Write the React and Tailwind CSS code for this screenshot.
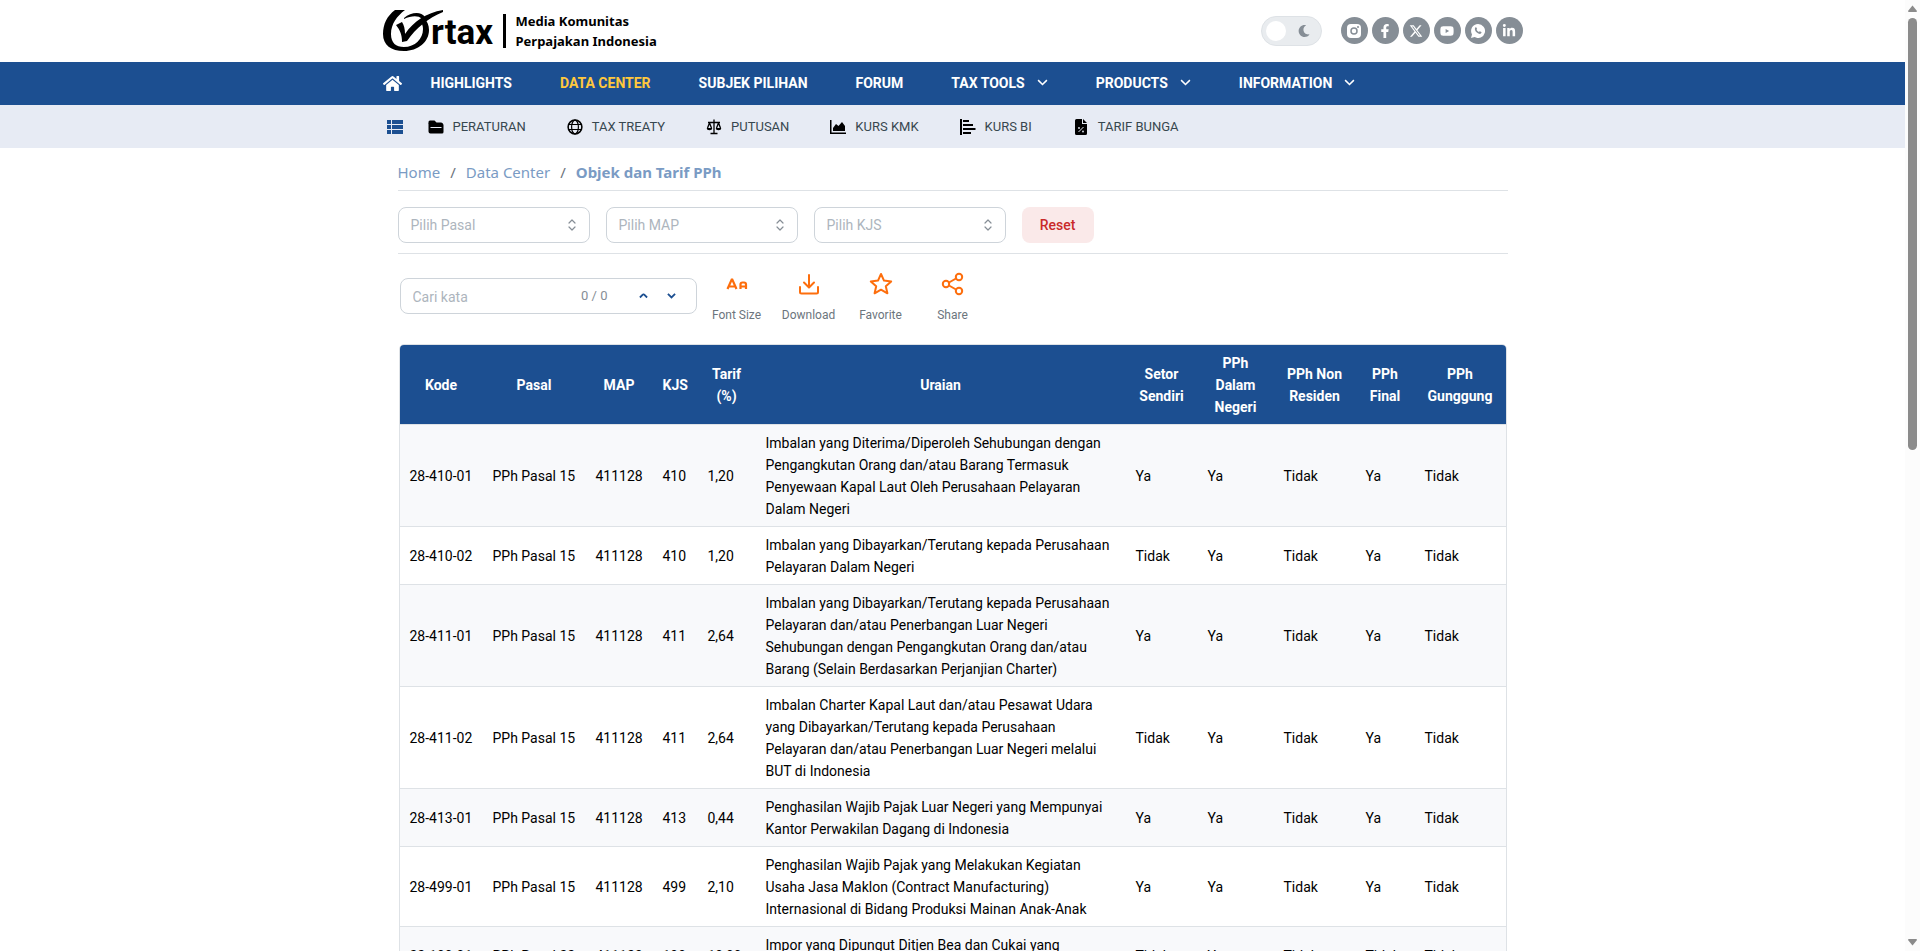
import { useState } from "react";
import clsx from "clsx";
import { FaHome, FaFacebookF, FaLinkedinIn, FaYoutube, FaMoon } from "react-icons/fa";
import { FaXTwitter } from "react-icons/fa6";

const MENU = [
  { label: "HIGHLIGHTS" },
  { label: "DATA CENTER", active: true },
  { label: "SUBJEK PILIHAN" },
  { label: "FORUM" },
  { label: "TAX TOOLS", dropdown: true },
  { label: "PRODUCTS", dropdown: true },
  { label: "INFORMATION", dropdown: true },
];

const SUBMENU = [
  { label: "PERATURAN", icon: FolderIcon },
  { label: "TAX TREATY", icon: GlobeIcon },
  { label: "PUTUSAN", icon: ScaleIcon },
  { label: "KURS KMK", icon: AreaIcon },
  { label: "KURS BI", icon: BarsIcon },
  { label: "TARIF BUNGA", icon: FilePercentIcon },
];

const SOCIALS = [
  { name: "Instagram", icon: InstagramIcon },
  { name: "Facebook", icon: FaFacebookF },
  { name: "X", icon: FaXTwitter },
  { name: "YouTube", icon: FaYoutube },
  { name: "WhatsApp", icon: WhatsappIcon },
  { name: "LinkedIn", icon: FaLinkedinIn },
];

const COLUMNS = [
  { label: "Kode", width: "w-[83px]" },
  { label: "Pasal", width: "w-[103px]" },
  { label: "MAP", width: "w-[67px]" },
  { label: "KJS", width: "w-[45px]" },
  { label: "Tarif (%)", width: "w-[58px]" },
  { label: "Uraian", width: "" },
  { label: "Setor Sendiri", width: "w-[72px]" },
  { label: "PPh Dalam Negeri", width: "w-[76px]" },
  { label: "PPh Non Residen", width: "w-[82px]" },
  { label: "PPh Final", width: "w-[59px]" },
  { label: "PPh Gunggung", width: "w-[91px]" },
];

const ROWS = [
  ["28-410-01", "PPh Pasal 15", "411128", "410", "1,20", "Imbalan yang Diterima/Diperoleh Sehubungan dengan Pengangkutan Orang dan/atau Barang Termasuk Penyewaan Kapal Laut Oleh Perusahaan Pelayaran Dalam Negeri", "Ya", "Ya", "Tidak", "Ya", "Tidak"],
  ["28-410-02", "PPh Pasal 15", "411128", "410", "1,20", "Imbalan yang Dibayarkan/Terutang kepada Perusahaan Pelayaran Dalam Negeri", "Tidak", "Ya", "Tidak", "Ya", "Tidak"],
  ["28-411-01", "PPh Pasal 15", "411128", "411", "2,64", "Imbalan yang Dibayarkan/Terutang kepada Perusahaan Pelayaran dan/atau Penerbangan Luar Negeri Sehubungan dengan Pengangkutan Orang dan/atau Barang (Selain Berdasarkan Perjanjian Charter)", "Ya", "Ya", "Tidak", "Ya", "Tidak"],
  ["28-411-02", "PPh Pasal 15", "411128", "411", "2,64", "Imbalan Charter Kapal Laut dan/atau Pesawat Udara yang Dibayarkan/Terutang kepada Perusahaan Pelayaran dan/atau Penerbangan Luar Negeri melalui BUT di Indonesia", "Tidak", "Ya", "Tidak", "Ya", "Tidak"],
  ["28-413-01", "PPh Pasal 15", "411128", "413", "0,44", "Penghasilan Wajib Pajak Luar Negeri yang Mempunyai Kantor Perwakilan Dagang di Indonesia", "Ya", "Ya", "Tidak", "Ya", "Tidak"],
  ["28-499-01", "PPh Pasal 15", "411128", "499", "2,10", "Penghasilan Wajib Pajak yang Melakukan Kegiatan Usaha Jasa Maklon (Contract Manufacturing) Internasional di Bidang Produksi Mainan Anak-Anak", "Ya", "Ya", "Tidak", "Ya", "Tidak"],
  ["22-100-01", "PPh Pasal 22", "411123", "100", "10,00", "Impor yang Dipungut Ditjen Bea dan Cukai yang Menggunakan Angka Pengenal Impor", "Tidak", "Ya", "Tidak", "Tidak", "Tidak"],
];

export default function App() {
  return (
    <div className="flex h-screen overflow-hidden bg-white font-[Roboto,sans-serif] text-black">
      <div className="min-w-0 flex-1 overflow-hidden">
        <TopBar />
        <MainNav />
        <SubNav />

        <main className="mx-auto max-w-[1140px] px-[15px]">
          <Breadcrumb />
          <Filters />
          <Toolbar />
          <TarifTable />
        </main>
      </div>

      <ScrollTrack />
    </div>
  );
}

/* HEADER */

function TopBar() {
  const [dark, setDark] = useState(false);

  return (
    <header className="mx-auto flex h-[62px] max-w-[1140px] items-center justify-between">
      <a href="#" className="flex items-center" aria-label="Ortax">
        <Logo />
        <span className="ml-2 h-[34px] w-[3px] bg-black" />
        <span className="ml-[10px] font-['Noto_Sans',sans-serif] text-[13px] leading-5 font-bold">
          Media Komunitas
          <br />
          Perpajakan Indonesia
        </span>
      </a>

      <div className="flex items-center gap-[19px] pb-px">
        <button
          type="button"
          aria-label="Dark mode"
          aria-pressed={dark}
          onClick={() => setDark((v) => !v)}
          className="flex h-[30px] w-[61px] items-center justify-between rounded-full border border-[#dee2e6] bg-[#e9ecef] pr-[11px] pl-1"
        >
          <span className="size-5 rounded-full bg-white" />
          <FaMoon className="size-3 text-[#868e96]" />
        </button>

        <div className="flex gap-1">
          {SOCIALS.map(({ name, icon: Icon }) => (
            <a
              key={name}
              href="#"
              aria-label={name}
              className="grid size-[27px] place-items-center rounded-full bg-[#868e96] text-white"
            >
              <Icon className="size-[14px]" />
            </a>
          ))}
        </div>
      </div>
    </header>
  );
}

function MainNav() {
  return (
    <nav className="bg-[#1c4f91]">
      <div className="mx-auto flex h-[43px] max-w-[1140px] items-center">
        <a href="#" aria-label="Home" className="mr-[29px] text-white">
          <FaHome className="size-[19px]" />
        </a>

        <div className="flex items-center gap-12 pb-[2px]">
          {MENU.map((item) => (
            <a
              key={item.label}
              href="#"
              className={clsx(
                "flex items-center gap-3 text-sm font-bold",
                item.active ? "text-[#ffc83d]" : "text-white"
              )}
            >
              {item.label}
              {item.dropdown && <Chevron className="w-[11px]" />}
            </a>
          ))}
        </div>
      </div>
    </nav>
  );
}

function SubNav() {
  return (
    <nav className="bg-[#e7ebf4]">
      <div className="mx-auto flex h-[43px] max-w-[1140px] items-center px-1">
        <a href="#" aria-label="Data Center" className="mr-[25px] text-[#1c4f91]">
          <ListIcon className="h-[14px] w-4" />
        </a>

        <div className="flex items-center gap-[41px]">
          {SUBMENU.map(({ label, icon: Icon }) => (
            <a
              key={label}
              href="#"
              className="flex items-center gap-[9px] text-[13px] text-[#37474f]"
            >
              <Icon className="size-4 text-black" />
              {label}
            </a>
          ))}
        </div>
      </div>
    </nav>
  );
}

/* CONTENT */

function Breadcrumb() {
  return (
    <div className="flex h-[43px] items-center gap-[10px] border-b border-[#dee2e6] pt-[6px] font-['Noto_Sans',sans-serif] text-[15px] text-[#7a9bc4]">
      <a href="#">Home</a>
      <span className="text-[#6c757d]">/</span>
      <a href="#">Data Center</a>
      <span className="text-[#6c757d]">/</span>
      <span className="font-bold">Objek dan Tarif PPh</span>
    </div>
  );
}

function Filters() {
  return (
    <div className="flex gap-4 border-b border-[#dee2e6] pt-4 pb-[10px]">
      {["Pilih Pasal", "Pilih MAP", "Pilih KJS"].map((label) => (
        <div key={label} className="relative">
          <select
            aria-label={label}
            className="h-9 w-48 appearance-none rounded-lg border border-[#ced4da] bg-white px-3 text-sm text-[#adb5bd]"
          >
            <option>{label}</option>
          </select>
          <SelectorIcon className="pointer-events-none absolute top-3 right-[14px] h-3 w-2 text-[#868e96]" />
        </div>
      ))}

      <button
        type="button"
        className="h-9 w-[72px] rounded-lg bg-[#fae9e9] text-sm font-medium text-[#c92a2a]"
      >
        Reset
      </button>
    </div>
  );
}

function Toolbar() {
  return (
    <div className="flex items-center gap-1 pt-[13px] pl-[2px]">
      <div className="flex h-9 w-[297px] items-center rounded-lg border border-[#ced4da] pr-[10px] pl-3">
        <input
          type="text"
          aria-label="Cari kata"
          placeholder="Cari kata"
          className="min-w-0 flex-1 pt-[2px] text-sm outline-none placeholder:text-[#adb5bd]"
        />
        <span className="mr-[22px] text-[13px] text-[#868e96]">0 / 0</span>
        <button type="button" aria-label="Sebelumnya" className="grid size-7 place-items-center text-[#1c4f91]">
          <Chevron className="w-[9px] rotate-180" bold />
        </button>
        <button type="button" aria-label="Berikutnya" className="grid size-7 place-items-center text-[#1c4f91]">
          <Chevron className="w-[9px]" bold />
        </button>
      </div>

      <div className="flex pt-[5px]">
        <ToolButton label="Font Size" icon={FontSizeIcon} />
        <ToolButton label="Download" icon={DownloadIcon} />
        <ToolButton label="Favorite" icon={StarIcon} />
        <ToolButton label="Share" icon={ShareIcon} />
      </div>
    </div>
  );
}

function ToolButton({ label, icon: Icon }) {
  return (
    <button
      type="button"
      className="flex w-[72px] flex-col items-center gap-[9px] text-xs leading-5 text-[#6c757d]"
    >
      <Icon className="size-6 text-[#fd6e0d]" />
      {label}
    </button>
  );
}

function TarifTable() {
  return (
    <div className="mx-px mt-[19px] overflow-hidden rounded-t-[5px] border border-[#dee2e6]">
      <table className="w-full table-fixed text-sm leading-[22px]">
        <thead>
          <tr className="bg-[#1c4f91] text-white">
            {COLUMNS.map((col) => (
              <th key={col.label} className={clsx("px-[10px] pt-[7px] pb-[6px] font-bold", col.width)}>
                {col.label}
              </th>
            ))}
          </tr>
        </thead>

        <tbody>
          {ROWS.map((row) => (
            <tr key={row[0]} className="border-t border-[#dee2e6] odd:bg-[#f8f9fb]">
              {row.map((cell, i) => (
                <td key={i} className="px-[10px] pt-[7px] pb-[6px]">
                  {cell}
                </td>
              ))}
            </tr>
          ))}
        </tbody>
      </table>
    </div>
  );
}

function ScrollTrack() {
  return (
    <div className="flex w-[15px] shrink-0 flex-col items-center bg-[#fcfcfc] py-[5px] text-[#8b8b8b]">
      <svg viewBox="0 0 9 7" className="h-[7px] w-[9px]" fill="currentColor">
        <path d="M4.5 0.5 9 6 8.5 7H.5L0 6z" />
      </svg>
      <span className="mt-[6px] h-[432px] w-[9px] rounded-full bg-[#8b8b8b]" />
      <svg viewBox="0 0 9 7" className="mt-auto h-[7px] w-[9px]" fill="currentColor">
        <path d="M4.5 6.5 0 1 .5 0h8L9 1z" />
      </svg>
    </div>
  );
}

/* ICONS */

function Logo() {
  return (
    <svg viewBox="0 0 112 44" className="h-11 w-28" role="img" aria-label="Ortax">
      <path
        d="M12 1h10C14 7 8 15 8 25c0 9 5 13 13 13 11 0 19-8 19-18 0-3-1-6-3-8l4-3c3 3 5 7 5 12 0 12-11 21-25 21C8 42 0 36 0 25 0 15 4 7 12 1z"
        fill="#000"
      />
      <path
        d="M13 16l6-3c2 3 3 7 3 12C31 12 43 4 60 1v2C45 9 33 19 24 32l-5 1c0-7-2-12-6-17z"
        fill="#000"
      />
      <path d="M21 9c7-6 17-7 21-1l-3 2c-4-4-11-3-18 0z" fill="#000" />
      <text x="48" y="35" fontFamily="Roboto, sans-serif" fontWeight="700" fontSize="35">
        rtax
      </text>
    </svg>
  );
}

function Chevron({ className, bold }) {
  return (
    <svg viewBox="0 0 10 6" className={className} fill="none" stroke="currentColor" strokeWidth={bold ? 2 : 1.4}>
      <path d="M1 1l4 4 4-4" />
    </svg>
  );
}

function SelectorIcon({ className }) {
  return (
    <svg viewBox="0 0 8 12" className={className} fill="none" stroke="currentColor" strokeWidth="1.2" strokeLinecap="round" strokeLinejoin="round">
      <path d="M1 4 4 1l3 3M1 8l3 3 3-3" />
    </svg>
  );
}

function ListIcon({ className }) {
  return (
    <svg viewBox="0 0 16 14" className={className} fill="currentColor">
      <path d="M0 0h4v4H0zM5 0h11v4H5zM0 5h4v4H0zM5 5h11v4H5zM0 10h4v4H0zM5 10h11v4H5z" />
    </svg>
  );
}

function FolderIcon({ className }) {
  return (
    <svg viewBox="0 0 16 16" className={className} fill="currentColor">
      <path d="M2 1.5h4.500L8.500 3.500h4.500a2 2 0 0 1 2 1.500H.5V3A1.500 1.500 0 0 1 2 1.500z" />
      <path d="M.5 4.500h13.500a1.500 1.500 0 0 1 1.500 1.500v7a1.500 1.500 0 0 1-1.500 1.500H2.500a2 2 0 0 1-2-2z" />
      <path d="M2.500 8.500h11" stroke="#e7ebf4" />
    </svg>
  );
}

function GlobeIcon({ className }) {
  return (
    <svg viewBox="0 0 16 16" className={className} fill="none" stroke="currentColor" strokeWidth="1.2">
      <circle cx="8" cy="8" r="6.9" strokeWidth="1.5" />
      <ellipse cx="8" cy="8" rx="3.4" ry="6.9" />
      <path d="M1.5 5.5h13M1.5 10.5h13" />
    </svg>
  );
}

function ScaleIcon({ className }) {
  return (
    <svg viewBox="0 0 16 16" className={className} fill="none" stroke="currentColor" strokeWidth="1.3">
      <path d="M8 .5v14M4.500 14.500h7M2 3.500h12M3.500 4 1.500 9M3.500 4l2 5M12.500 4l-2 5M12.500 4l2 5" />
      <path d="M.8 9h5.400a2.700 2.200 0 0 1-5.400 0zM9.800 9h5.400a2.700 2.200 0 0 1-5.400 0z" fill="currentColor" stroke="none" />
    </svg>
  );
}

function AreaIcon({ className }) {
  return (
    <svg viewBox="0 0 16 16" className={className} fill="currentColor">
      <path d="M0 1h1.500v12.500H16V15H0z" />
      <path d="M3 12V9l3-4 2.500 2L12 3l3 4v5z" />
    </svg>
  );
}

function BarsIcon({ className }) {
  return (
    <svg viewBox="0 0 16 16" className={className} fill="currentColor">
      <path d="M0 0h2v16H0zM3 1h6v2H3zM3 5h10v2H3zM3 9h12.500v2H3zM3 13h8v2H3z" />
    </svg>
  );
}

function FilePercentIcon({ className }) {
  return (
    <svg viewBox="0 0 16 16" className={className} fill="currentColor">
      <path d="M3.500 0H9v5h5v9.500a1.500 1.500 0 0 1-1.500 1.500h-9A1.500 1.500 0 0 1 2 14.500v-13A1.500 1.500 0 0 1 3.500 0zM10 0l4 4h-4z" />
      <path d="m5.500 13 5-5" stroke="#e7ebf4" />
      <circle cx="6" cy="9" r=".9" fill="#e7ebf4" />
      <circle cx="10" cy="12.5" r=".9" fill="#e7ebf4" />
    </svg>
  );
}

function InstagramIcon({ className }) {
  return (
    <svg viewBox="0 0 14 14" className={className}>
      <rect width="14" height="14" rx="4" fill="currentColor" />
      <circle cx="7" cy="7" r="3" fill="none" stroke="#868e96" strokeWidth="1.5" />
      <circle cx="11" cy="3" r="1" fill="#868e96" />
    </svg>
  );
}

function WhatsappIcon({ className }) {
  return (
    <svg viewBox="0 0 14 14" className={className}>
      <path d="M7 0a7 7 0 1 1-3.400 13.100L0 14l1-3.500A7 7 0 0 1 7 0z" fill="currentColor" />
      <path d="M4.300 3.500c.6-.6 1.100-.3 1.300.2l.5 1.200-.6.9c.5 1 1.300 1.800 2.400 2.300l.9-.8 1.500.8c.4.2.2 1-.4 1.500-1 .7-2.600.2-4.100-1C4.200 7.200 3.200 4.800 4.300 3.500z" fill="#868e96" />
    </svg>
  );
}

function FontSizeIcon({ className }) {
  return (
    <svg viewBox="0 0 24 24" className={className} fill="none" stroke="currentColor" strokeWidth="2.2">
      <path d="M2.500 17 6.700 7.500h.6L11.500 17M4 14.500h6M15.500 17v-4.500a2 2 0 0 1 2-2h1.500a2 2 0 0 1 2 2V17M15.500 14.500H21" />
    </svg>
  );
}

function DownloadIcon({ className }) {
  return (
    <svg viewBox="0 0 24 24" className={className} fill="none" stroke="currentColor" strokeWidth="2" strokeLinecap="round" strokeLinejoin="round">
      <path d="M3 15v5a1.500 1.500 0 0 0 1.500 1.500h15A1.500 1.500 0 0 0 21 20v-5M7 10.500l5 5 5-5M12 3v12" />
    </svg>
  );
}

function StarIcon({ className }) {
  return (
    <svg viewBox="0 0 24 24" className={className} fill="none" stroke="currentColor" strokeWidth="2" strokeLinejoin="round">
      <path d="m12 2 3 6.600 7.200.8-5.400 4.800 1.600 7.100L12 17.700l-6.400 3.600 1.600-7.100L1.800 9.400 9 8.600z" />
    </svg>
  );
}

function ShareIcon({ className }) {
  return (
    <svg viewBox="0 0 24 24" className={className} fill="none" stroke="currentColor" strokeWidth="2">
      <circle cx="5" cy="12" r="3.2" />
      <circle cx="18" cy="5" r="3.2" />
      <circle cx="18" cy="19" r="3.2" />
      <path d="m8 10.500 7-4M8 13.500l7 4" />
    </svg>
  );
}
